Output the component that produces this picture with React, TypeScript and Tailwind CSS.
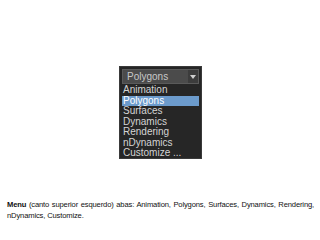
export default function App() {
  const items = [
    "Animation",
    "Polygons",
    "Surfaces",
    "Dynamics",
    "Rendering",
    "nDynamics",
    "Customize ...",
  ];

  return (
    <div className="w-[320px] h-[240px] bg-white relative overflow-hidden">
      <div className="pt-[66px] pl-[119px]">
        <div className="w-[83px] h-[93px] bg-[#262626] border border-[#3a3a3a] pt-[2px] px-[2px] overflow-hidden">
          <div className="flex h-[15px] bg-[#4b4b4b] border border-[#5a5a5a]">
            <div className="flex-1 pl-[4px] text-[10px] leading-[13px] text-[#c8c8c8] font-['Liberation_Sans',sans-serif]">
              Polygons
            </div>
            <div className="w-[10px] bg-[#3c3c3c] flex items-center justify-center">
              <svg width="6" height="4" viewBox="0 0 6 4">
                <path d="M0 0 L6 0 L3 4 Z" fill="#d0d0d0" />
              </svg>
            </div>
          </div>
          <ul className="mt-[1px]">
            {items.map((item) => (
              <li
                key={item}
                className={`h-[10.5px] pl-[1px] text-[10px] leading-[10.5px] font-['Liberation_Sans',sans-serif] ${
                  item === "Polygons"
                    ? "bg-[#6c9bcc] text-white"
                    : "text-[#d4d4d4]"
                }`}
              >
                {item}
              </li>
            ))}
          </ul>
        </div>
      </div>
      <p className="absolute left-[7px] top-[199px] w-[307px] text-[7.6px] leading-[11px] text-[#111] text-justify font-['Liberation_Sans',sans-serif] tracking-[-0.15px]">
        <span className="font-bold">Menu</span> (canto superior esquerdo) abas:
        Animation, Polygons, Surfaces, Dynamics, Rendering, nDynamics, Customize.
      </p>
    </div>
  );
}
